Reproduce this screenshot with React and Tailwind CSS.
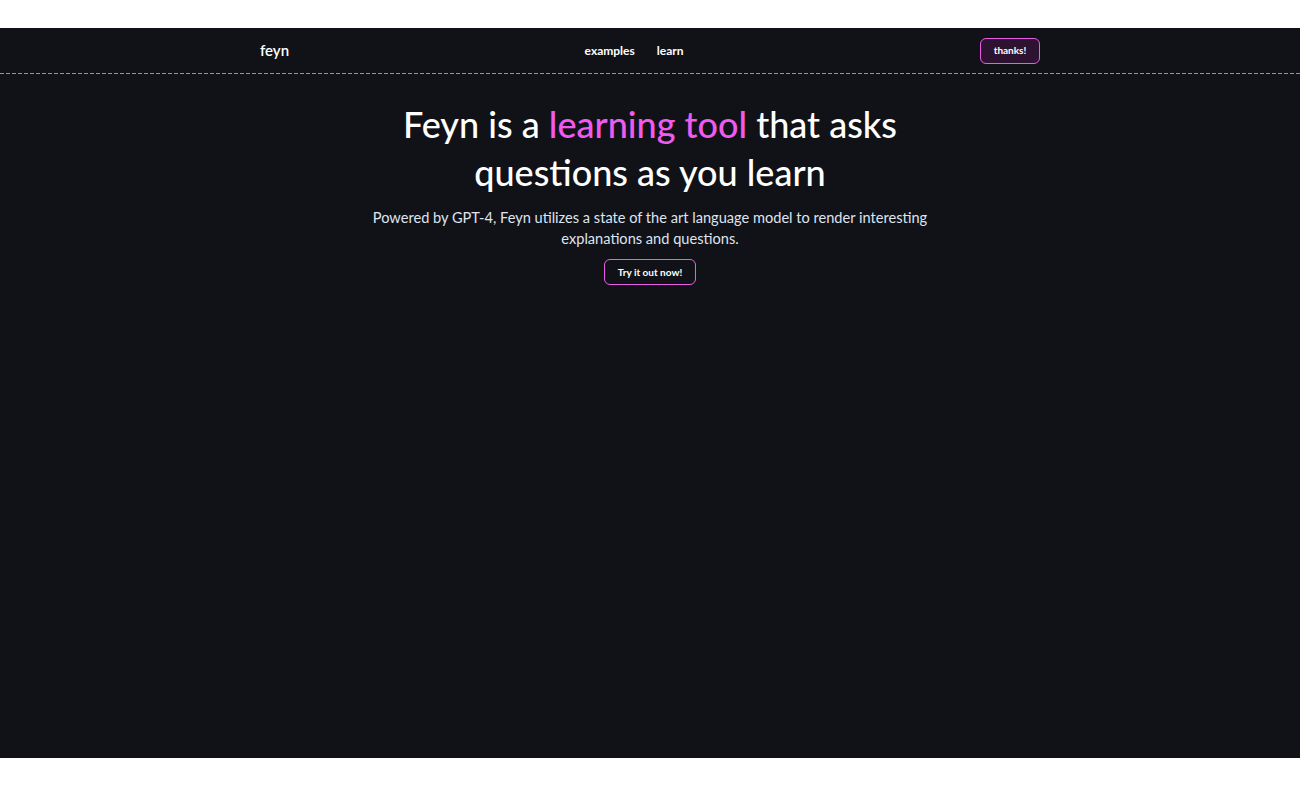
import React from 'react';

const font = { fontFamily: 'Lato, "Noto Sans", sans-serif' };

function Nav() {
  return (
    <nav>
      <div className="mx-auto flex h-[45px] w-[60%] items-center justify-between">
        <a className="text-[15px] font-semibold text-white">feyn</a>
        <div className="flex items-center gap-[22px] text-[12px] font-bold text-white">
          <a>examples</a>
          <a>learn</a>
        </div>
        <button className="ml-px h-[26px] w-[60px] rounded-md border border-[#e85ce8] bg-[#2e1231] text-[10px] font-bold text-white">
          thanks!
        </button>
      </div>
      {/* dashed divider */}
      <div className="h-px bg-[repeating-linear-gradient(90deg,#e85ce8_0_4px,transparent_4px_6px)]" />
    </nav>
  );
}

export default function App() {
  return (
    <div className="bg-white py-[28px]" style={font}>
      <div className="h-[730px] bg-[#111217]">
        <Nav />
        <main className="flex flex-col items-center pt-[26px] text-center">
          <h1 className="text-[36px] font-medium leading-[48px] text-white">
            Feyn is a <span className="text-[#ee5bee]">learning tool</span> that asks
            <br />
            questions as you learn
          </h1>
          <p className="mt-[11px] w-[570px] text-[14.6px] leading-[21px] text-[#dfe4f1]">
            Powered by GPT-4, Feyn utilizes a state of the art language model to render interesting explanations and questions.
          </p>
          <button className="mt-[10px] h-[26px] w-[92px] rounded-md border border-[#e85ce8] text-[10px] font-bold text-white">
            Try it out now!
          </button>
        </main>
      </div>
    </div>
  );
}
